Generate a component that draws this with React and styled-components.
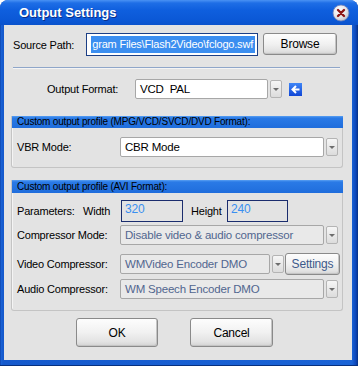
import React from 'react';
import styled, { createGlobalStyle, css } from 'styled-components';

const Global = createGlobalStyle`
    html, body { margin: 0; padding: 0; background: #fff; }
    body { font-family: "Liberation Sans", Arial, sans-serif; font-size: 11px; letter-spacing: -0.2px; }
`;

const Window = styled.div`
    width: 358px;
    height: 366px;
    box-sizing: border-box;
    display: flex;
    flex-direction: column;
    border-radius: 8px 8px 0 0;
    background: linear-gradient(90deg, #0a3a9e 0, #1a63d6 1px, #1559cc 3px, #1a63d6 352px, #0c45b8 356px, #07307f 358px);
    box-shadow: inset 0 -1px 0 #07307f;
`;

const TitleBar = styled.div`
    height: 25px;
    flex: none;
    display: flex;
    align-items: center;
    justify-content: space-between;
    padding: 0 8px 0 19px;
    border-radius: 8px 8px 0 0;
    background: linear-gradient(180deg, #4a92f4 0, #1e6ee6 3px, #0f5fde 10px, #0b58d6 20px, #0a52cc 25px);
`;

const Title = styled.span`
    color: #fff;
    font-weight: bold;
    font-size: 13px;
    letter-spacing: 0;
    text-shadow: 1px 1px 0 #0a2f8a;
`;

const Body = styled.div`
    flex: 1;
    margin: 0 6px 6px 4px;
    background: #e3e3e3;
    display: flex;
    flex-direction: column;
    color: #000;
`;

const Row = styled.div`
    display: flex;
    align-items: center;
    margin-top: ${p => p.$top || 0}px;
    padding-left: ${p => p.$left || 0}px;
    height: ${p => p.$h || 20}px;
`;

const Label = styled.span`
    width: ${p => p.$w ? `${p.$w}px` : 'auto'};
    padding-left: ${p => p.$pl || 0}px;
    flex: none;
    white-space: nowrap;
`;

const PathInput = styled.div`
    width: 172px;
    height: 23px;
    box-sizing: border-box;
    border: 1px solid #1c3f86;
    background: #fff;
    padding: 2px;
    display: flex;
    justify-content: flex-end;
    overflow: hidden;
`;

const Selected = styled.span`
    flex: none;
    background: #3b8ef0;
    color: #fff;
    font-size: 11px;
    line-height: 17px;
    white-space: nowrap;
    padding: 0 2px 0 1px;
`;

const Button = styled.div`
    width: ${p => p.$w}px;
    height: ${p => p.$h || 22}px;
    box-sizing: border-box;
    margin-left: ${p => p.$ml || 0}px;
    border: 1px solid #8a8a8a;
    border-radius: 3px;
    background: linear-gradient(180deg, #fdfdfd 0%, #f1f1f1 50%, #e2e2e2 85%, #d2d2d2 100%);
    box-shadow: inset -1px -1px 0 #c4c4c4;
    display: flex;
    align-items: center;
    justify-content: center;
    font-size: 12px;
    color: ${p => p.$muted ? '#3d5a8a' : '#000'};
    flex: none;
    align-self: flex-start;
`;

const Separator = styled.div`
    margin: 11px 12px 0 9px;
    height: 1px;
    background: #8fa6c9;
    box-shadow: 0 1px 0 #f4f4f4;
`;

const Select = styled.div`
    width: ${p => p.$w}px;
    height: 20px;
    box-sizing: border-box;
    border: 1px solid #a7a7a7;
    border-radius: 2px;
    flex: none;
    display: flex;
    align-items: center;
    padding-left: 4px;
    font-size: 11.5px;
    ${p => p.$disabled ? css`
        background: #e9e9e9;
        color: #51668f;
    ` : css`
        background: #fff;
        color: #000;
    `}
`;

const Drop = styled.div`
    width: 12px;
    height: 18px;
    box-sizing: border-box;
    margin-left: 2px;
    border: 1px solid #b4b4b4;
    border-radius: 2px;
    background: linear-gradient(180deg, #f6f6f6, #dcdcdc);
    display: flex;
    align-items: center;
    justify-content: center;
    flex: none;
    &::after {
        content: "";
        border-left: 3px solid transparent;
        border-right: 3px solid transparent;
        border-top: 3px solid #6d6d6d;
    }
`;

const Group = styled.div`
    margin: ${p => p.$top}px 9px 0 7px;
    height: ${p => p.$h}px;
    box-sizing: border-box;
    border: 1px solid #c4c4c4;
    border-top: none;
    border-radius: 0 0 3px 3px;
    box-shadow: inset 1px 1px 0 #f4f4f4;
    display: flex;
    flex-direction: column;
`;

const GroupHead = styled.div`
    height: ${p => p.$h}px;
    flex: none;
    background: linear-gradient(180deg, #5aa0f2 0, #2a7ae6 2px, #1f6ddc 100%);
    font-size: 10px;
    line-height: ${p => p.$h}px;
    padding-left: 5px;
    color: #000;
    margin-right: -1px;
`;

const NumBox = styled.div`
    width: ${p => p.$w}px;
    height: 22px;
    box-sizing: border-box;
    border: 1px solid #1b2d6e;
    color: #3a8ff0;
    font-size: 12px;
    padding: 1px 0 0 3px;
    flex: none;
`;

const IconWrap = styled.div`
    margin-left: 7px;
    width: 13px;
    height: 13px;
    display: flex;
`;

function CloseIcon() {
    return (
        <svg width="18" height="18" viewBox="0 0 18 18">
            <defs>
                <radialGradient id="cg" cx="40%" cy="35%" r="70%">
                    <stop offset="0" stopColor="#ffffff" />
                    <stop offset="0.6" stopColor="#e6e6ea" />
                    <stop offset="1" stopColor="#b9bcc8" />
                </radialGradient>
            </defs>
            <circle cx="9" cy="9" r="8" fill="url(#cg)" stroke="#6d7fb6" strokeWidth="0.8" />
            <path d="M6 6 L12 12 M12 6 L6 12" stroke="#8c1515" strokeWidth="2.4" strokeLinecap="round" />
        </svg>
    );
}

function BackIcon() {
    return (
        <svg width="13" height="13" viewBox="0 0 13 13">
            <defs>
                <linearGradient id="bg" x1="0" y1="0" x2="0" y2="1">
                    <stop offset="0" stopColor="#3f86f6" />
                    <stop offset="1" stopColor="#1046d6" />
                </linearGradient>
            </defs>
            <rect x="0" y="0" width="13" height="13" fill="url(#bg)" />
            <path d="M7 3 L3.5 6.5 L7 10 M3.5 6.5 H10.5" stroke="#fff" strokeWidth="2" fill="none" strokeLinejoin="miter" />
        </svg>
    );
}

export default function App() {
    return (
        <>
            <Global />
            <Window>
                <TitleBar>
                    <Title>Output Settings</Title>
                    <CloseIcon />
                </TitleBar>
                <Body>
                    <Row $top={8} $left={9} $h={23}>
                        <Label $w={73}>Source Path:</Label>
                        <PathInput><Selected>gram Files\Flash2Video\fclogo.swf</Selected></PathInput>
                        <Button $w={74} $ml={5}>Browse</Button>
                    </Row>
                    <Separator />
                    <Row $top={11} $left={43}>
                        <Label $w={88}>Output Format:</Label>
                        <Select $w={133}>VCD&nbsp; PAL</Select>
                        <Drop />
                        <IconWrap><BackIcon /></IconWrap>
                    </Row>
                    <Group $top={17} $h={52}>
                        <GroupHead $h={12}>Custom output profile (MPG/VCD/SVCD/DVD Format):</GroupHead>
                        <Row $top={9} $left={5}>
                            <Label $w={103}>VBR Mode:</Label>
                            <Select $w={204}>CBR Mode</Select>
                            <Drop />
                        </Row>
                    </Group>
                    <Group $top={12} $h={131}>
                        <GroupHead $h={13}>Custom output profile (AVI Format):</GroupHead>
                        <Row $top={7} $left={5} $h={22}>
                            <Label $w={66}>Parameters:</Label>
                            <Label $w={38}>Width</Label>
                            <NumBox $w={62}>320</NumBox>
                            <Label $w={36} $pl={8}>Height</Label>
                            <NumBox $w={61}>240</NumBox>
                        </Row>
                        <Row $top={3} $left={5}>
                            <Label $w={103}>Compressor Mode:</Label>
                            <Select $w={204} $disabled>Disable video &amp; audio compressor</Select>
                            <Drop />
                        </Row>
                        <Row $top={8} $left={5} $h={22}>
                            <Label $w={103}>Video Compressor:</Label>
                            <Select $w={150} $disabled>WMVideo Encoder DMO</Select>
                            <Drop />
                            <Button $w={55} $ml={1} $muted>Settings</Button>
                        </Row>
                        <Row $top={4} $left={5}>
                            <Label $w={103}>Audio Compressor:</Label>
                            <Select $w={204} $disabled>WM Speech Encoder DMO</Select>
                            <Drop />
                        </Row>
                    </Group>
                    <Row $top={7} $left={72} $h={29}>
                        <Button $w={82} $h={29}>OK</Button>
                        <Button $w={83} $h={29} $ml={32}>Cancel</Button>
                    </Row>
                </Body>
            </Window>
        </>
    );
}
